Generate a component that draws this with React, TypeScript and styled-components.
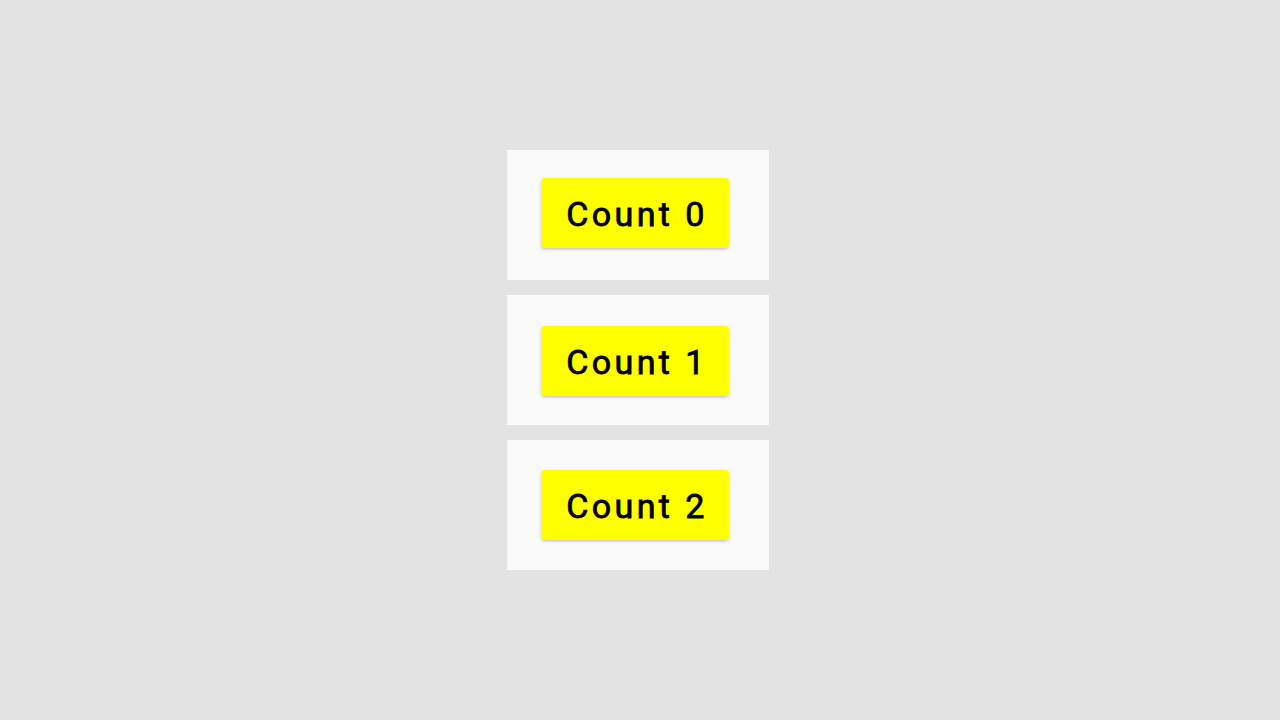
import React, { useState } from 'react';
import styled, { createGlobalStyle } from 'styled-components';

const GlobalStyle = createGlobalStyle`
  html, body {
    margin: 0;
    padding: 0;
    background: #e3e3e3;
    font-family: Roboto, 'Liberation Sans', sans-serif;
  }
`;

const Page = styled.div`
  width: 1280px;
  height: 720px;
  display: flex;
  align-items: center;
  justify-content: center;
  padding-right: 4px;
  box-sizing: border-box;
`;

const List = styled.div`
  display: flex;
  flex-direction: column;
  gap: 15px;
`;

const Card = styled.div<{ $offset: number }>`
  width: 262px;
  height: 130px;
  box-sizing: border-box;
  padding: ${({ $offset }) => $offset}px 40px 0 34px;
  background: #fafafa;
`;

const CountButton = styled.button`
  width: 188px;
  height: 70px;
  border: none;
  border-radius: 4px;
  background: #ffff00;
  color: #000;
  font-family: Roboto, 'Liberation Sans', sans-serif;
  font-size: 34px;
  font-weight: 400;
  -webkit-text-stroke: 0.8px #000;
  letter-spacing: 0.1em;
  padding: 2px 0 0 4px;
  cursor: pointer;
  box-shadow: 0 2px 3px -1px rgba(0, 0, 0, 0.18), 0 1px 4px 0 rgba(0, 0, 0, 0.1);
`;

const counters = [
  { value: 0, offset: 28 },
  { value: 1, offset: 31 },
  { value: 2, offset: 30 },
];

const App = () => {
  const [counts, setCounts] = useState(counters);

  const bump = (i: number) =>
    setCounts((prev) => prev.map((c, j) => (j === i ? { ...c, value: c.value + 1 } : c)));

  return (
    <>
      <GlobalStyle />
      <Page>
        <List>
          {counts.map((c, i) => (
            <Card key={i} $offset={c.offset}>
              <CountButton onClick={() => bump(i)}>Count {c.value}</CountButton>
            </Card>
          ))}
        </List>
      </Page>
    </>
  );
};

export default App;
